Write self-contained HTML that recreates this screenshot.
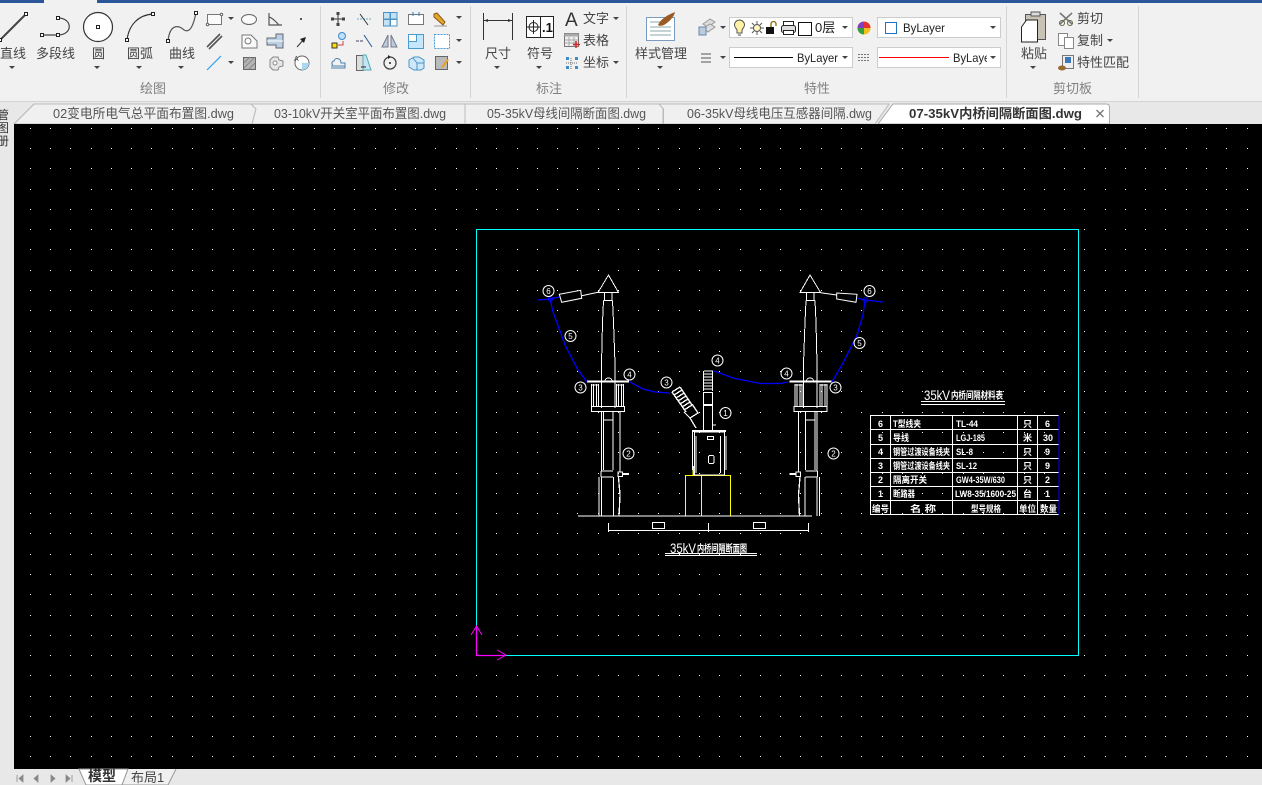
<!DOCTYPE html>
<html lang="zh"><head><meta charset="utf-8"><title>CAD</title>
<style>
html,body{margin:0;padding:0;background:#000;width:1262px;height:785px;overflow:hidden}
svg{position:absolute;left:0;top:0;display:block}
text{font-family:"Liberation Sans","Noto Sans CJK SC",sans-serif}
.l{font-size:13px;fill:#444}
.g{font-size:13px;fill:#808080}
.t{font-size:13px;fill:#555}
.i{fill:none;stroke:#555;stroke-width:1.2}
.u{fill:none;stroke:#0000ff;stroke-width:1.3}
.n{font-size:8px;fill:#fff;text-anchor:middle;font-weight:400}
.c{fill:#000;stroke:#fff;stroke-width:1}
.k{font-size:9px;fill:#fff;font-weight:700}
</style></head><body>
<svg width="1262" height="785" viewBox="0 0 1262 785">
<defs>
<path id="a" d="M-3 0h6l-3 3z" fill="#444"/>
<rect id="h" x="-1.5" y="-1.5" width="3" height="3" fill="#fff" stroke="#222"/>
</defs>
<!-- ribbon -->
<rect width="1262" height="102" fill="#f1f1f1"/>
<rect width="1262" height="3" fill="#2b579a"/>
<rect x="44" width="53" height="3" fill="#f1f1f1"/>
<rect y="101" width="1262" height="1" fill="#d4d4d4"/>
<g fill="#d5d5d5"><rect x="320" y="6" width="1" height="92"/><rect x="470" y="6" width="1" height="92"/><rect x="626" y="6" width="1" height="92"/><rect x="1006" y="6" width="1" height="92"/><rect x="1138" y="6" width="1" height="92"/></g>

<!-- draw group -->
<path d="M0 40L26 14" stroke="#444" stroke-width="2"/><use href="#h" x="26" y="14"/><use href="#h" x="0" y="40"/>
<path d="M42 35H58M58 18C73 18 73 35 58 35" fill="none" stroke="#444" stroke-width="1.2"/><use href="#h" x="42" y="35"/><use href="#h" x="58" y="35"/><use href="#h" x="58" y="18"/>
<circle cx="98" cy="27" r="14.5" fill="#fff" stroke="#333" stroke-width="1.2"/><use href="#h" x="98" y="27"/>
<path d="M127 40C129 24 139 15 153 14" fill="none" stroke="#333" stroke-width="1.2"/><use href="#h" x="127" y="40"/><use href="#h" x="153" y="14"/>
<path d="M168 41C170 22 180 26 184 30C191 34 194 22 196 13" fill="none" stroke="#555" stroke-width="1.2"/><use href="#h" x="168" y="41"/><use href="#h" x="196" y="13"/>
<rect x="207.500" y="14.500" width="14" height="10" fill="#fafafa" stroke="#777"/><g fill="#fff" stroke="#666"><circle cx="207.500" cy="24.500" r="1.200"/><circle cx="221.500" cy="14.500" r="1.200"/></g><use href="#a" x="231" y="17"/>
<ellipse cx="249" cy="19.500" rx="7.500" ry="5" fill="#fafafa" stroke="#666"/>
<path class="i" d="M269 13V25H282M269 17C273 18 276 22 279 25"/>
<rect x="300" y="18" width="2" height="2" fill="#555"/>
<path d="M207 47L220 34M209 49L222 36" stroke="#555" stroke-width="1.600"/>
<path d="M242 35H251L257 41V48H242Z" fill="#fafafa" stroke="#777"/><circle cx="248" cy="41" r="3" fill="none" stroke="#777"/>
<path d="M267 38H276V34H283V48H276V45H267Z" fill="#bcd0e4" stroke="#667"/><path d="M267 41H283" stroke="#fff"/>
<path d="M297 47L305 38" stroke="#333"/><path d="M300 39L306 37L304 43Z" fill="#222"/>
<path d="M207 70L221 56" stroke="#2e9fe8" stroke-width="1.200"/><use href="#a" x="231" y="61"/>
<rect x="243.500" y="57.500" width="12" height="12" fill="#b5b5b5" stroke="#666"/><path d="M244 63l6-6M244 68l11-11M249 69l6-6" stroke="#888"/>
<path d="M270 60l3-3h5l1 3 4 1v5l-4 1-1 3h-5l-3-3z" fill="#e6e6e6" stroke="#888"/><circle cx="275" cy="63" r="2" fill="#fff" stroke="#888"/>
<circle cx="302" cy="63" r="7" fill="#fff" stroke="#666"/><path d="M302 63H309A7 7 0 0 1 302 70Z" fill="#a8d8f4"/><text x="294" y="61" font-size="7" fill="#444">A</text>
<text class="l" x="0" y="58">直线</text><use href="#a" x="12" y="66"/>
<text class="l" x="36" y="58">多段线</text>
<text class="l" x="92" y="58">圆</text><use href="#a" x="97" y="66"/>
<text class="l" x="127" y="58">圆弧</text><use href="#a" x="139" y="66"/>
<text class="l" x="169" y="58">曲线</text><use href="#a" x="181" y="66"/>
<text class="g" x="140" y="93">绘图</text>

<!-- modify -->
<path class="i" d="M338 13V25M332 19H344"/><g fill="#444"><rect x="336.500" y="12" width="3" height="3"/><rect x="336.500" y="23" width="3" height="3"/><rect x="331" y="17.500" width="3" height="3"/><rect x="342" y="17.500" width="3" height="3"/></g>
<path d="M357 19H371" stroke="#6ab" stroke-dasharray="2 1"/><path d="M360 14L368 25" stroke="#334"/>
<g fill="#c5e2f5" stroke="#4a94c4"><rect x="383.500" y="12.500" width="6.500" height="6.500"/><rect x="390.500" y="12.500" width="6.500" height="6.500"/><rect x="383.500" y="19.500" width="6.500" height="6.500"/><rect x="390.500" y="19.500" width="6.500" height="6.500" fill="#fff"/></g>
<rect x="408.500" y="14.500" width="15" height="10" fill="#fff" stroke="#777"/><path d="M413 12v4M419 12v4" stroke="#2b7cc0"/>
<path d="M434 14l3-1 8 9-2 3-9-8z" fill="#e3a52e" stroke="#8a5a14"/><path d="M434 26H447" stroke="#999"/><use href="#a" x="459" y="16"/>
<circle cx="342" cy="36" r="3.500" fill="#bfe0f6" stroke="#3c8cc8"/><rect x="332" y="43" width="5" height="5" fill="#fd0" stroke="#333"/><path d="M338 45h5v-4" fill="none" stroke="#c44"/>
<path d="M356 41h7" stroke="#446" stroke-dasharray="3 1"/><path d="M364 35L372 47" stroke="#225a96"/>
<path d="M388 35v12h-6zM391 35v12h6z" fill="#bcd" stroke="#778"/>
<rect x="408.500" y="34.500" width="15" height="14" fill="#c6e6fb" stroke="#4a9ad4"/><rect x="408.500" y="34.500" width="8" height="7" fill="#fff" stroke="#4a9ad4"/>
<rect x="434.500" y="34.500" width="15" height="14" fill="#fff" stroke="#4a9ad4" stroke-dasharray="2 1"/><use href="#a" x="459" y="39"/>
<path d="M331 68H345V63H341C341 58 335 57 334 61C332 61 331 64 333 65" fill="none" stroke="#4a80b0"/><path d="M331 66h14" stroke="#4a80b0"/>
<rect x="356.500" y="55.500" width="7" height="15" fill="#ddd" stroke="#666"/><path d="M363 55h3l5 15h-8z" fill="#c5e4f8" stroke="#5aa"/><path d="M361 67h5" stroke="#222"/>
<circle cx="390" cy="63" r="6" fill="none" stroke="#444" stroke-width="1.300"/><circle cx="390" cy="63" r="1" fill="#222"/><path d="M388 55l3 2-3 2z" fill="#222"/>
<path d="M409 60l5-3h5l5 3v8l-3 2h-7l-5-3z" fill="#cde8fa" stroke="#4a94c4"/><path d="M413 58l4 5v7M417 63h7" stroke="#4a94c4" fill="none"/>
<rect x="435.500" y="56.500" width="12" height="13" fill="#bbb" stroke="#666"/><path d="M441 67l6-8 2 1-6 8z" fill="#e3a52e"/><use href="#a" x="459" y="61"/>
<text class="g" x="383" y="93">修改</text>

<!-- annotate -->
<path d="M483.500 13V40M512.500 13V40" stroke="#333"/><path d="M484 20.500H512" stroke="#333"/><path d="M484 20.500l4-1.500v3zM512 20.500l-4-1.500v3z" fill="#333"/>
<text class="l" x="485" y="58">尺寸</text><use href="#a" x="497" y="66"/>
<rect x="526.500" y="16.500" width="27" height="21" fill="#fff" stroke="#222"/><path d="M540.500 16.500v21" stroke="#222"/><circle cx="533.500" cy="27" r="4.500" fill="none" stroke="#222"/><path d="M533.500 20v14M527 27h13" stroke="#222"/>
<text x="542" y="32" font-size="13" font-weight="700" fill="#111">.1</text>
<text class="l" x="527" y="58">符号</text><use href="#a" x="539" y="66"/>
<text x="565" y="26" font-size="19" fill="#333">A</text>
<text class="l" x="583" y="23">文字</text><use href="#a" x="616" y="17"/>
<rect x="564.500" y="33.500" width="14" height="13" fill="#eee" stroke="#777"/><rect x="564.500" y="33.500" width="14" height="3" fill="#aaa"/><path d="M569 37v9M574 37v9M565 40h13M565 43h13" stroke="#aaa"/><path d="M576 41v7M573 44.500h7" stroke="#d22" stroke-width="1.500"/>
<text class="l" x="583" y="45">表格</text>
<g fill="#3c8cc8"><rect x="566" y="57" width="3" height="3"/><rect x="566" y="66" width="3" height="3"/><rect x="575" y="57" width="3" height="3"/><rect x="575" y="66" width="3" height="3"/></g><path d="M571 58v12M566 63h12" stroke="#666" stroke-dasharray="1 1"/>
<text class="l" x="583" y="67">坐标</text><use href="#a" x="616" y="61"/>
<text class="g" x="536" y="93">标注</text>

<!-- style -->
<rect x="646.500" y="17.500" width="28" height="23" fill="#fff" stroke="#7a9cc0"/><path d="M650 22h12M650 27h21M650 31h21M650 35h21" stroke="#8aa"/><path d="M658 25C661 18 670 14 675 12C674 17 669 22 664 25C661 26 659 26 658 25Z" fill="#9a5a22"/>
<text class="l" x="635" y="58">样式管理</text><use href="#a" x="660" y="66"/>

<!-- properties -->
<path d="M703 24l7-5 5 3-7 5z" fill="#ddd" stroke="#999"/><path d="M703 28l7-4 5 3-7 5z" fill="#ddd" stroke="#999"/><rect x="699" y="27" width="7" height="8" fill="#bcd" stroke="#68a"/><use href="#a" x="723" y="26"/>
<rect x="729.500" y="17.500" width="123" height="20" fill="#fff" stroke="#ccc"/>
<path d="M737 30C736 28 734.500 27 734.500 25A5 5 0 0 1 744.500 25C744.500 27 743 28 742 30V33H737Z" fill="#fff2a8" stroke="#554"/><path d="M738 35h3" stroke="#444"/>
<circle cx="757" cy="28" r="3.500" fill="#fff6c0" stroke="#555"/><path d="M757 21v3M757 32v3M750 28h3M761 28h3M752 23l2 2M760 31l2 2M762 23l-2 2M754 31l-2 2" stroke="#555"/>
<rect x="766" y="27" width="8" height="7" fill="#111"/><path d="M771 27v-3a2.500 2.500 0 0 1 5 0v2" fill="none" stroke="#8a6a00" stroke-width="1.300"/>
<rect x="781.500" y="25.500" width="14" height="7" rx="2" fill="#ddd" stroke="#222"/><rect x="783.500" y="21.500" width="10" height="4" fill="#fff" stroke="#222"/><rect x="783.500" y="30.500" width="10" height="4" fill="#fff" stroke="#222"/>
<rect x="798.500" y="22.500" width="13" height="13" fill="#fff" stroke="#111"/>
<text x="815" y="32" font-size="13" fill="#222">0层</text><use href="#a" x="845" y="26"/>
<circle cx="864" cy="28" r="6.500" fill="#f0c020"/><path d="M864 28V21.500A6.500 6.500 0 0 1 870.500 28Z" fill="#e83030"/><path d="M864 28V21.500A6.500 6.500 0 0 0 857.500 28Z" fill="#8040c0"/><path d="M864 28H857.500A6.500 6.500 0 0 0 864 34.500Z" fill="#30a040"/>
<rect x="877.500" y="17.500" width="123" height="20" fill="#fff" stroke="#ccc"/><rect x="885.500" y="22.500" width="11" height="11" fill="#fff" stroke="#2272c0"/>
<text x="903" y="32" font-size="12" fill="#222" textLength="42" lengthAdjust="spacingAndGlyphs">ByLayer</text><use href="#a" x="993" y="26"/>
<path d="M701 54h10M701 58h10M701 62h10" stroke="#555"/><use href="#a" x="723" y="56"/>
<rect x="729.500" y="47.500" width="123" height="20" fill="#fff" stroke="#ccc"/><rect x="734" y="57" width="59" height="1" fill="#000"/>
<text x="797" y="62" font-size="12" fill="#222" textLength="41" lengthAdjust="spacingAndGlyphs">ByLayer</text><use href="#a" x="845" y="56"/>
<path d="M858 54.500h12M858 57.500h12M858 60.500h12" stroke="#777" stroke-dasharray="2 1"/>
<rect x="877.500" y="47.500" width="123" height="20" fill="#fff" stroke="#ccc"/><rect x="879" y="57" width="70" height="1" fill="#ff0000"/>
<svg x="953" y="47" width="34" height="20"><text x="0" y="15" font-size="12" fill="#222" textLength="41" lengthAdjust="spacingAndGlyphs">ByLayer</text></svg><use href="#a" x="993" y="56"/>
<text class="g" x="804" y="93">特性</text>

<!-- clipboard -->
<rect x="1025.500" y="14.500" width="20" height="25" fill="#c8c2b4" stroke="#555"/><rect x="1031" y="12" width="9" height="4" fill="#ddd" stroke="#555"/><path d="M1021.500 27l5-7h11v22h-16z" fill="#fff" stroke="#222"/>
<text class="l" x="1021" y="58">粘贴</text><use href="#a" x="1033" y="66"/>
<path d="M1060 13l12 11M1072 13l-12 11" stroke="#777" stroke-width="1.600"/><circle cx="1062" cy="23" r="2.500" fill="none" stroke="#664"/><circle cx="1070" cy="23" r="2.500" fill="none" stroke="#664"/>
<text class="l" x="1077" y="23">剪切</text>
<rect x="1058.500" y="33.500" width="9" height="12" fill="#fff" stroke="#888"/><rect x="1064.500" y="37.500" width="9" height="11" fill="#fff" stroke="#888"/>
<text class="l" x="1077" y="45">复制</text><use href="#a" x="1110" y="39"/>
<rect x="1062.500" y="55.500" width="11" height="13" fill="#eee" stroke="#777"/><rect x="1065" y="57" width="6" height="6" fill="#3c78b8"/><ellipse cx="1062" cy="68" rx="4" ry="2.500" fill="#9a6a30"/>
<text class="l" x="1077" y="67">特性匹配</text>
<text class="g" x="1053" y="93">剪切板</text>

<!-- tabs row -->
<rect y="102" width="1262" height="22" fill="#e8e8e8"/>
<path d="M14 124L34 104H251L256 109L252 124Z" fill="#f0f0f0" stroke="#bbb"/>
<path d="M252 124L256 109L251 104H465V124Z" fill="#f0f0f0" stroke="#bbb"/>
<path d="M465 124V104H663V124Z" fill="#f0f0f0" stroke="#bbb"/>
<path d="M663.500 124V109L659 104H889L875 124Z" fill="#f0f0f0" stroke="#bbb"/>
<path d="M878 124L893 104H1106Q1109.500 104 1109.500 107V124Z" fill="#fff" stroke="#aaa"/>
<text class="t" x="53" y="118" textLength="181" lengthAdjust="spacingAndGlyphs">02变电所电气总平面布置图.dwg</text>
<text class="t" x="274" y="118" textLength="172" lengthAdjust="spacingAndGlyphs">03-10kV开关室平面布置图.dwg</text>
<text class="t" x="487" y="118" textLength="159" lengthAdjust="spacingAndGlyphs">05-35kV母线间隔断面图.dwg</text>
<text class="t" x="687" y="118" textLength="185" lengthAdjust="spacingAndGlyphs">06-35kV母线电压互感器间隔.dwg</text>
<text class="t" x="909" y="118" font-weight="700" style="fill:#333" textLength="173" lengthAdjust="spacingAndGlyphs">07-35kV内桥间隔断面图.dwg</text>
<path d="M1096.500 110L1103.500 117M1103.500 110L1096.500 117" stroke="#777" stroke-width="1.400"/>
<rect y="102" width="14" height="683" fill="#e8e8e8"/>
<path d="M14 124L34 104" stroke="#bbb"/>
<svg x="0" y="105" width="9" height="48"><text x="-3" y="14" font-size="12" fill="#333">管</text><text x="-3" y="27" font-size="12" fill="#333">图</text><text x="-3" y="40" font-size="12" fill="#333">册</text></svg>

<!-- canvas -->
<rect x="14" y="124" width="1248" height="645" fill="#000"/>
<defs><path id="r" stroke="#fff" stroke-width="1" shape-rendering="crispEdges" d="M30 .5h1M50 .5h1M70 .5h1M91 .5h1M111 .5h1M131 .5h1M151 .5h1M172 .5h1M192 .5h1M212 .5h1M233 .5h1M253 .5h1M273 .5h1M293 .5h1M314 .5h1M334 .5h1M354 .5h1M375 .5h1M395 .5h1M415 .5h1M435 .5h1M456 .5h1M476 .5h1M496 .5h1M517 .5h1M537 .5h1M557 .5h1M577 .5h1M598 .5h1M618 .5h1M638 .5h1M658 .5h1M679 .5h1M699 .5h1M719 .5h1M740 .5h1M760 .5h1M780 .5h1M800 .5h1M821 .5h1M841 .5h1M861 .5h1M882 .5h1M902 .5h1M922 .5h1M942 .5h1M963 .5h1M983 .5h1M1003 .5h1M1024 .5h1M1044 .5h1M1064 .5h1M1084 .5h1M1105 .5h1M1125 .5h1M1145 .5h1M1165 .5h1M1186 .5h1M1206 .5h1M1226 .5h1M1247 .5h1"/></defs>
<use href="#r" y="128"/><use href="#r" y="148"/><use href="#r" y="168"/><use href="#r" y="189"/><use href="#r" y="209"/><use href="#r" y="229"/><use href="#r" y="249"/><use href="#r" y="270"/><use href="#r" y="290"/><use href="#r" y="310"/><use href="#r" y="331"/><use href="#r" y="351"/><use href="#r" y="371"/><use href="#r" y="391"/><use href="#r" y="412"/><use href="#r" y="432"/><use href="#r" y="452"/><use href="#r" y="473"/><use href="#r" y="493"/><use href="#r" y="513"/><use href="#r" y="533"/><use href="#r" y="554"/><use href="#r" y="574"/><use href="#r" y="594"/><use href="#r" y="615"/><use href="#r" y="635"/><use href="#r" y="655"/><use href="#r" y="675"/><use href="#r" y="696"/><use href="#r" y="716"/><use href="#r" y="736"/><use href="#r" y="756"/>

<!-- frame -->
<rect x="476.500" y="229.500" width="602" height="426" fill="none" stroke="#00ffff" shape-rendering="crispEdges"/>
<g stroke="#ff00ff" fill="none" stroke-width="1"><path d="M476.500 626V655.500H506" stroke-width="1.300"/><path d="M471 635L476.500 626L482 635M497 650L506 655L497 660"/></g>

<!-- towers -->
<defs><g id="tower" fill="none" stroke="#fff">
<path d="M608.500 275L598 292.500H618.500Z"/>
<path d="M604.500 293V300.500M612 293V300.500M603.500 300.500H612.500M603.500 300.500L602.500 322L601.500 364V408M612.500 300.500L613.500 322L615 364V408"/>
<path d="M587 381.500H629" stroke-width="2.400"/>
<path d="M605 381C605 377 612 377 612 381"/>
<path d="M591.500 384V407M593.500 384V407M596.500 384V407M598.500 384V407M616.500 384V407M618.500 384V407M621.500 384V407M623.500 384V407"/>
<path d="M591 385H599M616 385H624"/>
<rect x="591.500" y="406.500" width="33" height="5" stroke-width="1.300"/>
<path d="M601.500 411V471M620 411V472M603.500 411V470M613 411V470M604 420H613"/>
<path d="M601 471H613M601 477H613M601 471V477"/>
<path d="M599 477V516M601.500 477V516M613.500 477V516M618.500 477L620 495L619 516" stroke-width="1.300"/>
<path d="M623 474H629" stroke-width="2"/><rect x="618" y="472" width="4.500" height="4.500"/>
</g></defs>
<use href="#tower" shape-rendering="crispEdges"/>
<use href="#tower" transform="matrix(-1 0 0 1 1418.500 0)" shape-rendering="crispEdges"/>
<g fill="none" stroke="#fff">
<path d="M559.300 294.300L580.700 290.300L581.700 298.300L561.700 302.300Z"/><path d="M581.700 295.700L598 292.300"/>
<path d="M836.700 293L857 294.300L856 302.300L836.700 299Z"/><path d="M820.700 292.700L836.700 295"/>
</g>

<!-- wires -->
<path class="u" d="M538 300L550 299L559 297M550 299L553 312L557 323L565 345L578 370L587 382"/>
<path class="u" d="M883 302L865 300L857 298M865 300L863 315L857 335L843 363L832 382"/>
<path class="u" d="M630 382L643 389L655 392L670 393"/>
<path class="u" d="M714 371L733 378L760 383.500H780L788 382"/>
<circle cx="550.500" cy="299" r="2.200" fill="none" stroke="#00f"/><circle cx="865.500" cy="300" r="2.200" fill="none" stroke="#00f"/>

<!-- switch -->
<g fill="none" stroke="#fff" shape-rendering="crispEdges">
<rect x="685.500" y="475.500" width="45" height="40.500" stroke="#ffff00"/><path d="M701.500 476V516" stroke="#ffff00"/><path d="M693 466V476" stroke="#ffff00" stroke-width="1.500"/>
<path d="M694.500 432H724.500V475H694.500Z" stroke-width="1.400"/><path d="M692.500 432V470M696 436V473M726 436V470M720.500 436V473"/>
<path d="M692 431H726" stroke-width="2"/>
<rect x="707.500" y="436.500" width="6" height="3"/><rect x="708.500" y="455.500" width="5.500" height="8" rx="1.500"/>
<path d="M703.500 405V431M712.500 405V431M713 425h3"/>
<rect x="703.500" y="392.500" width="9" height="12"/>
<path d="M704 371H713M704 374H712M704 377H712M704 380H712M704 383H712M704 386H712M704 389H712M703.500 371V391M712.500 371V391"/>
<path d="M703 405H713" stroke-width="2"/>
<path d="M672 392L680 387M674 395L682 390M676 398L684 393M678 401L686 396M680 404L688 399M682 407L690 402M684 410L692 405M672 392L686 412M680 387L692 405" stroke-width="1.400"/>
<path d="M684 412L690 418L698 413L692 404M690 418L696 428" stroke-width="1.300"/>
<path d="M578 516H812"/>
<path d="M608 530.500H808M608.500 523V532M708.500 523V532M808.500 523V532"/>
<rect x="652.500" y="522.500" width="12" height="6"/><rect x="753.500" y="522.500" width="12" height="6"/>
<path d="M665 553.500H757M665 555.500H757"/>
<path d="M921 401.500H1005M921 404.500H1005"/>
<path d="M870.500 415.500H1059M870.500 429.500H1059M870.500 444.500H1059M870.500 458.500H1059M870.500 472.500H1059M870.500 486.500H1059M870.500 500.500H1059M870.500 514.500H1059M870.500 415V515M890.500 415V515M952.500 415V515M1017.500 415V515M1037.500 415V515"/>
<path d="M1059 415V515" stroke="#0000ff"/>
</g>

<!-- labels in circles -->
<g>
<circle class="c" cx="548.500" cy="291" r="5.500"/><text class="n" x="548.500" y="294">6</text>
<circle class="c" cx="570.500" cy="336" r="5.500"/><text class="n" x="570.500" y="339">5</text>
<circle class="c" cx="580.500" cy="387.500" r="5.500"/><text class="n" x="580.500" y="390.500">3</text>
<circle class="c" cx="629.500" cy="374.500" r="5.500"/><text class="n" x="629.500" y="377.500">4</text>
<circle class="c" cx="666.500" cy="382.500" r="5.500"/><text class="n" x="666.500" y="385.500">3</text>
<circle class="c" cx="717.500" cy="360.500" r="5.500"/><text class="n" x="717.500" y="363.500">4</text>
<circle class="c" cx="786.500" cy="373.500" r="5.500"/><text class="n" x="786.500" y="376.500">4</text>
<circle class="c" cx="835.500" cy="387.500" r="5.500"/><text class="n" x="835.500" y="390.500">3</text>
<circle class="c" cx="859.500" cy="343" r="5.500"/><text class="n" x="859.500" y="346">5</text>
<circle class="c" cx="869.500" cy="291" r="5.500"/><text class="n" x="869.500" y="294">6</text>
<circle class="c" cx="725.500" cy="413" r="5.500"/><text class="n" x="725.500" y="416">1</text>
<circle class="c" cx="628.500" cy="453.500" r="5.500"/><text class="n" x="628.500" y="456.500">2</text>
<circle class="c" cx="833.500" cy="453.500" r="5.500"/><text class="n" x="833.500" y="456.500">2</text>
</g>

<!-- titles -->
<text x="670" y="553" font-size="14" fill="#fff" textLength="26" lengthAdjust="spacingAndGlyphs">35kV</text>
<text x="697" y="552" font-size="10" font-weight="700" fill="#fff" textLength="50" lengthAdjust="spacingAndGlyphs">内桥间隔断面图</text>
<text x="924" y="400" font-size="14" fill="#fff" textLength="26" lengthAdjust="spacingAndGlyphs">35kV</text>
<text x="951" y="399" font-size="10" font-weight="700" fill="#fff" textLength="52" lengthAdjust="spacingAndGlyphs">内桥间隔材料表</text>

<!-- table -->
<g>
<text class="k" x="878" y="427">6</text><text class="k" x="893" y="427" textLength="28" lengthAdjust="spacingAndGlyphs">T型线夹</text><text class="k" x="956" y="427" textLength="22" lengthAdjust="spacingAndGlyphs">TL-44</text><text class="k" x="1023" y="427">只</text><text class="k" x="1045" y="427">6</text>
<text class="k" x="878" y="441">5</text><text class="k" x="893" y="441" textLength="16" lengthAdjust="spacingAndGlyphs">导线</text><text class="k" x="956" y="441" textLength="29" lengthAdjust="spacingAndGlyphs">LGJ-185</text><text class="k" x="1023" y="441">米</text><text class="k" x="1043" y="441">30</text>
<text class="k" x="878" y="455">4</text><text class="k" x="893" y="455" textLength="57" lengthAdjust="spacingAndGlyphs">钢管过渡设备线夹</text><text class="k" x="956" y="455" textLength="17" lengthAdjust="spacingAndGlyphs">SL-8</text><text class="k" x="1023" y="455">只</text><text class="k" x="1045" y="455">9</text>
<text class="k" x="878" y="469">3</text><text class="k" x="893" y="469" textLength="57" lengthAdjust="spacingAndGlyphs">钢管过渡设备线夹</text><text class="k" x="956" y="469" textLength="21" lengthAdjust="spacingAndGlyphs">SL-12</text><text class="k" x="1023" y="469">只</text><text class="k" x="1045" y="469">9</text>
<text class="k" x="878" y="483">2</text><text class="k" x="893" y="483" textLength="34" lengthAdjust="spacingAndGlyphs">隔离开关</text><text class="k" x="956" y="483" textLength="49" lengthAdjust="spacingAndGlyphs">GW4-35W/630</text><text class="k" x="1023" y="483">只</text><text class="k" x="1045" y="483">2</text>
<text class="k" x="878" y="497">1</text><text class="k" x="893" y="497" textLength="22" lengthAdjust="spacingAndGlyphs">断路器</text><text class="k" x="955" y="497" textLength="61" lengthAdjust="spacingAndGlyphs">LW8-35/1600-25</text><text class="k" x="1023" y="497">台</text><text class="k" x="1045" y="497">1</text>
<text class="k" x="872" y="512" textLength="17" lengthAdjust="spacingAndGlyphs">编号</text><text class="k" x="910" y="512" textLength="26" lengthAdjust="spacingAndGlyphs">名 称</text><text class="k" x="971" y="512" textLength="30" lengthAdjust="spacingAndGlyphs">型号规格</text><text class="k" x="1019" y="512" textLength="17" lengthAdjust="spacingAndGlyphs">单位</text><text class="k" x="1040" y="512" textLength="17" lengthAdjust="spacingAndGlyphs">数量</text>
</g>

<!-- bottom bar -->
<rect y="769" width="1262" height="16" fill="#e8e8e8"/>
<path d="M17 775v7M23 775l-4 3.500 4 3.500zM38 775l-4 3.500 4 3.500zM51 775l4 3.500-4 3.500zM66 775l4 3.500-4 3.500zM72 775v7" fill="#888" stroke="#888" stroke-width=".8"/>
<path d="M79 769L86 785H122L128 769Z" fill="#fff" stroke="#999"/>
<path d="M128 769L122 785H168L176 769" fill="#f0f0f0" stroke="#999"/>
<text x="88" y="781" font-size="14" font-weight="700" fill="#333">模型</text>
<text x="131" y="782" font-size="13" fill="#444">布局1</text>
</svg>
</body></html>
